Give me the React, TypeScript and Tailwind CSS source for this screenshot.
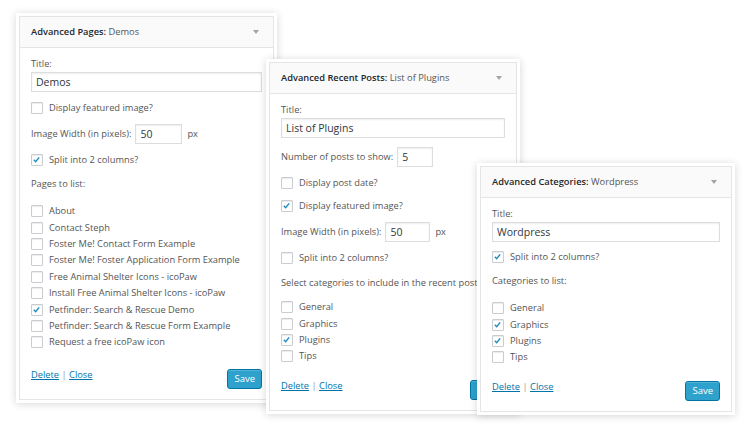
import type { ReactNode } from "react";

const font = { fontFamily: '"Open Sans", "Noto Sans", sans-serif' };

type WidgetProps = {
  className: string;
  title: string;
  name: string;
  children: ReactNode;
};

// One widget box: shadowed frame, grey header with arrow, form body
function Widget({ className, title, name, children }: WidgetProps) {
  return (
    <div
      className={`absolute bg-white p-[3px] shadow-[0_1px_8px_rgba(0,0,0,0.16)] ${className}`}
    >
      <div className="border border-[#e5e5e5] bg-white">
        <div className="flex h-[31px] items-center justify-between border-b border-[#e5e5e5] bg-[#fafafa] pl-[11px] pr-[14px]">
          <span className="text-[9.3px] text-[#23282d]">
            <span className="font-semibold">{title}:</span>{" "}
            <span className="text-[#555]">{name}</span>
          </span>
          <span className="h-0 w-0 border-x-[3.5px] border-t-[4px] border-x-transparent border-t-[#a0a5aa]" />
        </div>
        <div className="px-[11px] pb-[10px] pt-[9px] text-[9.3px] leading-[14px] text-[#555]">
          {children}
        </div>
      </div>
    </div>
  );
}

function Box({ checked }: { checked?: boolean }) {
  return (
    <span className="relative mr-[6px] inline-block h-[12px] w-[12px] shrink-0 rounded-[1px] border border-[#c9cdd1] bg-white shadow-[inset_0_1px_1px_rgba(0,0,0,0.08)]">
      {checked && (
        <svg viewBox="0 0 12 12" className="absolute left-[0px] top-[0px] h-[10px] w-[10px]">
          <path d="M2.2 5.8 L4.4 8 L8.6 2.8" fill="none" stroke="#1e8cbe" strokeWidth="1.7" />
        </svg>
      )}
    </span>
  );
}

function Check({ label, checked, className = "" }: { label: string; checked?: boolean; className?: string }) {
  return (
    <div className={`flex items-center ${className}`}>
      <Box checked={checked} />
      <span className="whitespace-nowrap">{label}</span>
    </div>
  );
}

function TextInput({ value, className }: { value: string; className: string }) {
  return (
    <div
      className={`flex h-[20px] items-center border border-[#ddd] bg-white pl-[4px] text-[10.5px] text-[#32373c] shadow-[inset_0_1px_2px_rgba(0,0,0,0.07)] ${className}`}
    >
      {value}
    </div>
  );
}

function List({ items, className }: { items: [string, boolean][]; className: string }) {
  return (
    <div className={className}>
      {items.map(([label, checked]) => (
        <Check key={label} label={label} checked={checked} className="h-[16.4px]" />
      ))}
    </div>
  );
}

function Footer({ className }: { className: string }) {
  return (
    <div className={`flex items-start justify-between ${className}`}>
      <span className="text-[#0073aa]">
        <span className="underline">Delete</span> <span className="text-[#999]">|</span>{" "}
        <span className="underline">Close</span>
      </span>
      <button className="mt-[1px] h-[20px] rounded-[3px] border border-[#0074a2] bg-[#2ea2cc] px-[6px] text-[9.5px] text-white shadow-[inset_0_1px_0_rgba(120,200,230,0.5)]">
        Save
      </button>
    </div>
  );
}

export default function App() {
  return (
    <div className="relative h-[427px] w-[750px] overflow-hidden bg-white" style={font}>
      <Widget className="left-[16px] top-[13px] w-[261px]" title="Advanced Pages" name="Demos">
        <div>Title:</div>
        <TextInput value="Demos" className="mt-[1px] w-full" />
        <Check label="Display featured image?" className="mt-[9px]" />
        <div className="mt-[9px] flex items-center">
          <span>Image Width (in pixels):</span>
          <TextInput value="50" className="ml-[4px] mr-[5px] w-[47px]" />
          <span>px</span>
        </div>
        <Check label="Split into 2 columns?" checked className="mt-[9px]" />
        <div className="mt-[10px]">Pages to list:</div>
        <List
          className="mt-[12px]"
          items={[
            ["About", false],
            ["Contact Steph", false],
            ["Foster Me! Contact Form Example", false],
            ["Foster Me! Foster Application Form Example", false],
            ["Free Animal Shelter Icons - icoPaw", false],
            ["Install Free Animal Shelter Icons - icoPaw", false],
            ["Petfinder: Search & Rescue Demo", true],
            ["Petfinder: Search & Rescue Form Example", false],
            ["Request a free icoPaw icon", false],
          ]}
        />
        <Footer className="mt-[17px]" />
      </Widget>

      <Widget className="left-[266px] top-[59px] w-[254px]" title="Advanced Recent Posts" name="List of Plugins">
        <div>Title:</div>
        <TextInput value="List of Plugins" className="mt-[1px] w-full" />
        <div className="mt-[9px] flex items-center">
          <span>Number of posts to show:</span>
          <TextInput value="5" className="ml-[4px] w-[36px]" />
        </div>
        <Check label="Display post date?" className="mt-[9px]" />
        <Check label="Display featured image?" checked className="mt-[9px]" />
        <div className="mt-[9px] flex items-center">
          <span>Image Width (in pixels):</span>
          <TextInput value="50" className="ml-[4px] mr-[5px] w-[45px]" />
          <span>px</span>
        </div>
        <Check label="Split into 2 columns?" className="mt-[9px]" />
        <div className="mt-[11px] w-[196px] overflow-hidden whitespace-nowrap">
          Select categories to include in the recent posts list:
        </div>
        <List
          className="mt-[9px]"
          items={[
            ["General", false],
            ["Graphics", false],
            ["Plugins", true],
            ["Tips", false],
          ]}
        />
        <Footer className="mt-[14px]" />
      </Widget>

      <Widget className="left-[477px] top-[163px] w-[258px]" title="Advanced Categories" name="Wordpress">
        <div>Title:</div>
        <TextInput value="Wordpress" className="mt-[1px] w-full" />
        <Check label="Split into 2 columns?" checked className="mt-[8px]" />
        <div className="mt-[10px]">Categories to list:</div>
        <List
          className="mt-[12px]"
          items={[
            ["General", false],
            ["Graphics", true],
            ["Plugins", true],
            ["Tips", false],
          ]}
        />
        <Footer className="mt-[14px]" />
      </Widget>
    </div>
  );
}
